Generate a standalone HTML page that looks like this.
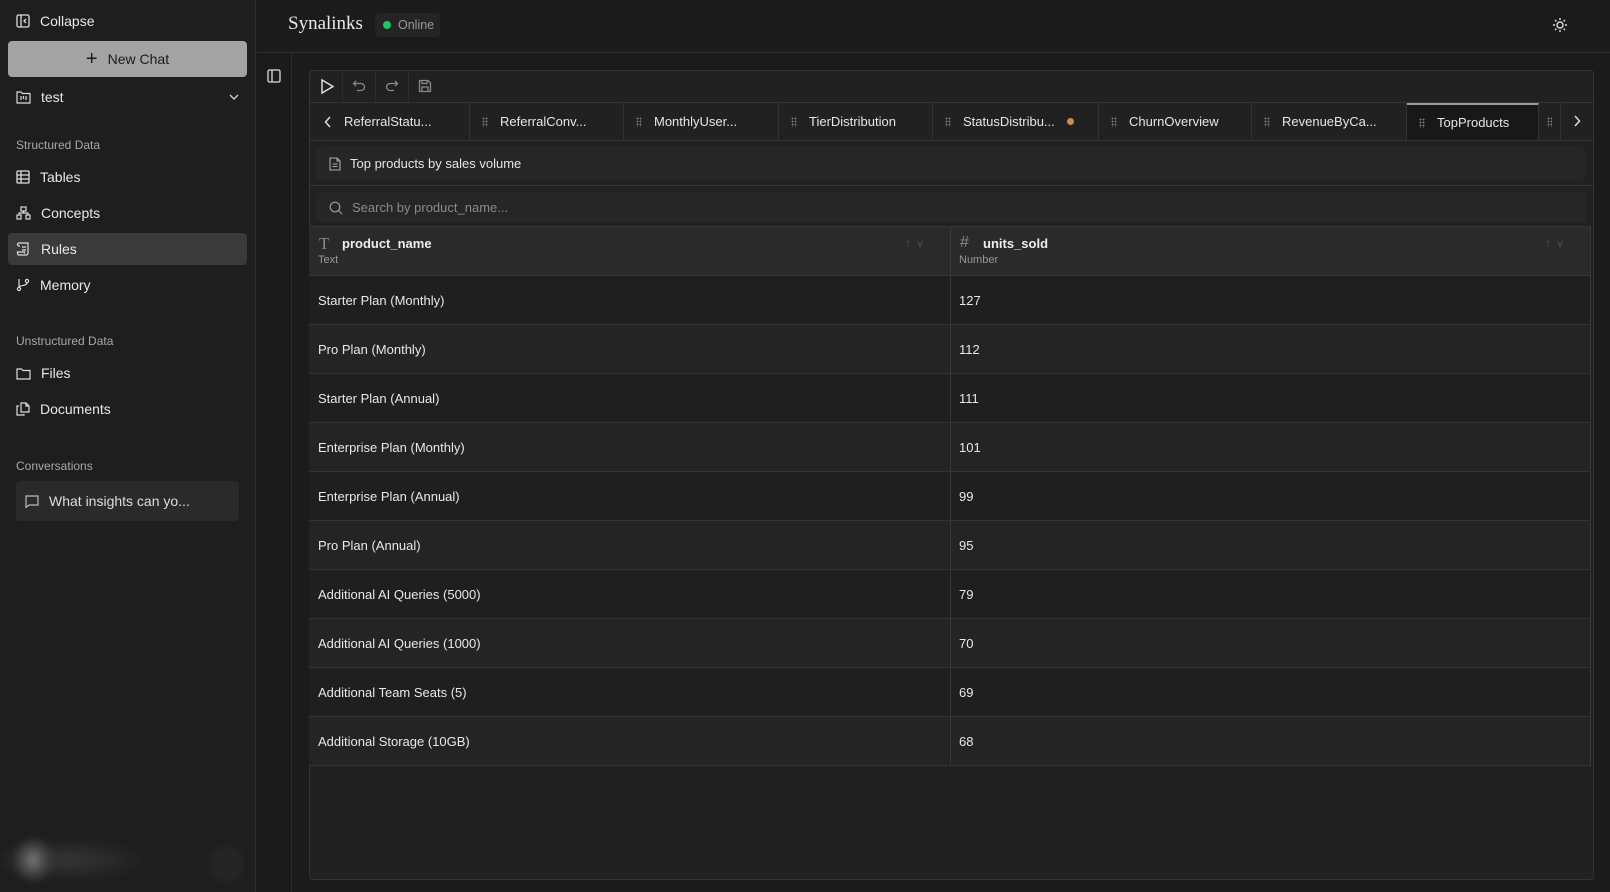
<!DOCTYPE html>
<html><head><meta charset="utf-8"><style>
*{box-sizing:border-box;margin:0;padding:0}
body{width:1610px;height:892px;background:#1b1b1b;font-family:"Liberation Sans",sans-serif;color:#e6e6e6;position:relative;overflow:hidden;font-size:14px}
.a{position:absolute}
svg{display:block}
.side{left:0;top:0;width:256px;height:892px;background:#1e1e1e;border-right:1px solid #2c2c2c}
.item{left:16px;height:20px;display:flex;align-items:center;gap:10px;font-size:14px;color:#e8e8e8}
.sec{left:16px;font-size:12px;color:#a8a8a8}
.tab{top:103px;height:37px;border-right:1px solid #333;display:flex;align-items:center;font-size:13px;color:#e6e6e6}
.grip{width:6px;height:10px;margin:0 12px 0 12px;background:radial-gradient(circle,#777 0.8px,transparent 1px) 0 0/3px 3px}
.row{left:309px;width:1282px;height:49px;border-bottom:1px solid #333;font-size:13px;color:#e8e8e8}
.row span{position:absolute;top:17px}
</style></head><body>
<div class="a side">
  <div class="a item" style="top:11px"><svg width="14" height="14" viewBox="0 0 14 14" fill="none" stroke="#ddd" stroke-width="1.3"><rect x="1" y="1" width="12" height="12" rx="1.5"/><path d="M5 1v12M10 5L8 7l2 2"/></svg>Collapse</div>
  <div class="a" style="left:8px;top:41px;width:239px;height:36px;background:#a3a3a3;border-radius:4px;display:flex;align-items:center;justify-content:center;gap:10px;color:#1b1b1b;font-size:14px"><span style="font-size:20px;font-weight:300;line-height:1">+</span>New Chat</div>
  <div class="a item" style="top:87px;width:224px"><svg width="15" height="14" viewBox="0 0 15 14" fill="none" stroke="#ddd" stroke-width="1.2"><path d="M1 2h4l1.5 1.5H14V13H1z"/><path d="M5 6v4M7.5 6v3M10 6v4"/></svg>test<svg style="margin-left:auto" width="12" height="8" viewBox="0 0 12 8" fill="none" stroke="#ccc" stroke-width="1.4"><path d="M2 2l4 4 4-4"/></svg></div>
  <div class="a sec" style="top:138px">Structured Data</div>
  <div class="a item" style="top:167px"><svg width="14" height="14" viewBox="0 0 14 14" fill="none" stroke="#ddd" stroke-width="1.3"><rect x="1" y="1" width="12" height="12" rx="1"/><path d="M1 5h12M1 9h12M5 1v12"/></svg>Tables</div>
  <div class="a item" style="top:203px"><svg width="15" height="14" viewBox="0 0 15 14" fill="none" stroke="#ddd" stroke-width="1.2"><rect x="5" y="1" width="5" height="4"/><rect x="1" y="9" width="4" height="4"/><rect x="10" y="9" width="4" height="4"/><path d="M7.5 5v2H3v2M7.5 7H12v2"/></svg>Concepts</div>
  <div class="a" style="left:8px;top:233px;width:239px;height:32px;background:#3a3a3a;border-radius:4px"></div>
  <div class="a item" style="top:239px"><svg width="15" height="14" viewBox="0 0 15 14" fill="none" stroke="#ddd" stroke-width="1.2"><path d="M3 1h9v10a2 2 0 0 1-2 2H3M3 1a1.5 1.5 0 0 0 0 3h1M3 13a1.5 1.5 0 0 1-1.5-1.5V10h7v1.5M6 5h4M6 8h4"/></svg>Rules</div>
  <div class="a item" style="top:275px"><svg width="14" height="14" viewBox="0 0 14 14" fill="none" stroke="#ddd" stroke-width="1.2"><circle cx="3" cy="11" r="1.6"/><circle cx="11" cy="3" r="1.6"/><path d="M3 1v8.4M11 4.6c0 4-8 2-8 5"/></svg>Memory</div>
  <div class="a sec" style="top:334px">Unstructured Data</div>
  <div class="a item" style="top:363px"><svg width="15" height="13" viewBox="0 0 15 13" fill="none" stroke="#ddd" stroke-width="1.2"><path d="M1 2h4.5l1.5 1.5h7V12H1z"/></svg>Files</div>
  <div class="a item" style="top:399px"><svg width="14" height="14" viewBox="0 0 14 14" fill="none" stroke="#ddd" stroke-width="1.2"><path d="M5 1h5l3 3v6H5zM10 1v3h3M3 4H1v9h7v-1"/></svg>Documents</div>
  <div class="a sec" style="top:459px">Conversations</div>
  <div class="a" style="left:16px;top:481px;width:223px;height:40px;background:#2a2a2a;border-radius:4px;display:flex;align-items:center;gap:10px;padding-left:9px;font-size:14px;color:#ddd"><svg width="14" height="13" viewBox="0 0 14 13" fill="none" stroke="#bbb" stroke-width="1.2"><path d="M1 1h12v9H4l-3 2.5z"/></svg>What insights can yo...</div>
  <div class="a" style="left:0px;top:820px;width:180px;height:70px;background:radial-gradient(ellipse 22px 24px at 33px 40px,#777,#444 55%,transparent 100%),radial-gradient(ellipse 80px 22px at 70px 40px,#363636,transparent 100%);filter:blur(3px)"></div>
  <div class="a" style="left:210px;top:845px;width:34px;height:38px;border-radius:50%;background:#252525;filter:blur(2px)"></div>
</div>
<div class="a" style="left:257px;top:0;width:1353px;height:53px;border-bottom:1px solid #303030;background:#1b1b1b"></div>
<div class="a" style="left:288px;top:13px;font-family:'Liberation Serif',serif;font-size:19px;color:#e8e8e8">Synalinks</div>
<div class="a" style="left:375px;top:13px;width:65px;height:24px;background:#242424;border-radius:4px;font-size:12.5px;color:#999;display:flex;align-items:center;padding-left:8px;gap:7px"><span style="width:8px;height:8px;border-radius:50%;background:#22c55e"></span>Online</div>
<svg class="a" style="left:1552px;top:17px" width="16" height="16" viewBox="0 0 16 16" fill="none" stroke="#ddd" stroke-width="1.4"><circle cx="8" cy="8" r="3"/><path d="M8 1v2M8 13v2M1 8h2M13 8h2M3 3l1.4 1.4M11.6 11.6L13 13M3 13l1.4-1.4M11.6 4.4L13 3"/></svg>
<div class="a" style="left:257px;top:54px;width:35px;height:838px;border-right:1px solid #2c2c2c;background:#1b1b1b"></div>
<svg class="a" style="left:267px;top:69px" width="14" height="14" viewBox="0 0 14 14" fill="none" stroke="#ddd" stroke-width="1.3"><rect x="1" y="1" width="12" height="12" rx="1.5"/><path d="M5 1v12"/></svg>
<div class="a" style="left:309px;top:70px;width:1285px;height:810px;background:#212121;border:1px solid #333;border-radius:4px"></div>
<div class="a" style="left:310px;top:102px;width:1283px;height:1px;background:#333"></div>
<svg class="a" style="left:319px;top:78px" width="16" height="17" viewBox="0 0 16 17" fill="none" stroke="#e6e6e6" stroke-width="1.4"><path d="M3 2l11 6.5L3 15z"/></svg>
<div class="a" style="left:342px;top:71px;width:1px;height:31px;background:#2e2e2e"></div>
<svg class="a" style="left:352px;top:79px" width="14" height="14" viewBox="0 0 14 14" fill="none" stroke="#888" stroke-width="1.3"><path d="M4 2L1.5 4.5 4 7M1.5 4.5H9a3.5 3.5 0 0 1 0 7H5"/></svg>
<div class="a" style="left:375px;top:71px;width:1px;height:31px;background:#2e2e2e"></div>
<svg class="a" style="left:385px;top:79px" width="14" height="14" viewBox="0 0 14 14" fill="none" stroke="#888" stroke-width="1.3"><path d="M10 2l2.5 2.5L10 7M12.5 4.5H5a3.5 3.5 0 0 0 0 7h4"/></svg>
<div class="a" style="left:408px;top:71px;width:1px;height:31px;background:#2e2e2e"></div>
<svg class="a" style="left:418px;top:79px" width="14" height="14" viewBox="0 0 14 14" fill="none" stroke="#888" stroke-width="1.3"><path d="M1.5 1.5h8.5l2.5 2.5v8.5h-11zM4 1.5v3h5v-3M4 12.5V8h6v4.5"/></svg>
<div class="a" style="left:310px;top:140px;width:1283px;height:1px;background:#333"></div>
<div class="a tab" style="left:310px;width:160px"><svg style="margin:0 12px 0 14px" width="8" height="12" viewBox="0 0 8 12" fill="none" stroke="#ddd" stroke-width="1.5"><path d="M6 1L1.5 6 6 11"/></svg>ReferralStatu...</div>
<div class="a tab" style="left:470px;width:154px"><span class="grip"></span>ReferralConv...</div>
<div class="a tab" style="left:624px;width:155px"><span class="grip"></span>MonthlyUser...</div>
<div class="a tab" style="left:779px;width:154px"><span class="grip"></span>TierDistribution</div>
<div class="a tab" style="left:933px;width:166px"><span class="grip"></span>StatusDistribu...<span style="width:7px;height:7px;border-radius:50%;background:#d08a4a;margin-left:12px"></span></div>
<div class="a tab" style="left:1099px;width:153px"><span class="grip"></span>ChurnOverview</div>
<div class="a tab" style="left:1252px;width:155px"><span class="grip"></span>RevenueByCa...</div>
<div class="a tab" style="left:1407px;width:132px;background:#181818;border-top:2px solid #9a9a9a"><span class="grip"></span>TopProducts</div>
<div class="a tab" style="left:1539px;width:22px;border-right:1px solid #333"><span class="grip" style="margin:0 8px"></span></div>
<svg class="a" style="left:1573px;top:115px" width="8" height="12" viewBox="0 0 8 12" fill="none" stroke="#ddd" stroke-width="1.5"><path d="M2 1l4.5 5L2 11"/></svg>
<div class="a" style="left:316px;top:147px;width:1270px;height:33px;background:#262626;border-radius:6px;display:flex;align-items:center;padding-left:13px;gap:9px;font-size:13px;color:#e6e6e6"><svg width="12" height="14" viewBox="0 0 12 14" fill="none" stroke="#aaa" stroke-width="1.1"><path d="M1 1h7l3 3v9H1zM8 1v3h3M3.5 7h5M3.5 9.5h5"/></svg>Top products by sales volume</div>
<div class="a" style="left:310px;top:185px;width:1283px;height:1px;background:#333"></div>
<div class="a" style="left:316px;top:192px;width:1270px;height:31px;background:#262626;border-radius:6px;display:flex;align-items:center;padding-left:13px;gap:9px;font-size:13px;color:#8a8a8a"><svg width="14" height="14" viewBox="0 0 14 14" fill="none" stroke="#999" stroke-width="1.2"><circle cx="6" cy="6" r="4.8"/><path d="M9.5 9.5L13 13"/></svg>Search by product_name...</div>
<div class="a" style="left:309px;top:226px;width:1282px;height:50px;background:#2a2a2a;border-top:1px solid #333;border-bottom:1px solid #383838"></div>
<div class="a" style="left:319px;top:234px;font-family:'Liberation Serif',serif;font-size:17px;color:#888">T</div>
<div class="a" style="left:342px;top:236px;font-size:13px;font-weight:bold;color:#eee">product_name</div>
<div class="a" style="left:318px;top:254px;font-size:11px;color:#999">Text</div>
<div class="a" style="left:905px;top:236px;font-size:12px;color:#555">↑&nbsp;&nbsp;<span style="font-size:10px">v</span></div>
<div class="a" style="left:960px;top:234px;font-size:16px;color:#888">#</div>
<div class="a" style="left:983px;top:236px;font-size:13px;font-weight:bold;color:#eee">units_sold</div>
<div class="a" style="left:959px;top:254px;font-size:11px;color:#999">Number</div>
<div class="a" style="left:1545px;top:236px;font-size:12px;color:#555">↑&nbsp;&nbsp;<span style="font-size:10px">v</span></div>
<div class="a row" style="top:276px;background:#1f1f1f"><span style="left:9px">Starter Plan (Monthly)</span><span style="left:650px">127</span></div>
<div class="a row" style="top:325px;background:#242424"><span style="left:9px">Pro Plan (Monthly)</span><span style="left:650px">112</span></div>
<div class="a row" style="top:374px;background:#1f1f1f"><span style="left:9px">Starter Plan (Annual)</span><span style="left:650px">111</span></div>
<div class="a row" style="top:423px;background:#242424"><span style="left:9px">Enterprise Plan (Monthly)</span><span style="left:650px">101</span></div>
<div class="a row" style="top:472px;background:#1f1f1f"><span style="left:9px">Enterprise Plan (Annual)</span><span style="left:650px">99</span></div>
<div class="a row" style="top:521px;background:#242424"><span style="left:9px">Pro Plan (Annual)</span><span style="left:650px">95</span></div>
<div class="a row" style="top:570px;background:#1f1f1f"><span style="left:9px">Additional AI Queries (5000)</span><span style="left:650px">79</span></div>
<div class="a row" style="top:619px;background:#242424"><span style="left:9px">Additional AI Queries (1000)</span><span style="left:650px">70</span></div>
<div class="a row" style="top:668px;background:#1f1f1f"><span style="left:9px">Additional Team Seats (5)</span><span style="left:650px">69</span></div>
<div class="a row" style="top:717px;background:#242424"><span style="left:9px">Additional Storage (10GB)</span><span style="left:650px">68</span></div>
<div class="a" style="left:950px;top:226px;width:1px;height:540px;background:#383838"></div>
<div class="a" style="left:1590px;top:226px;width:1px;height:540px;background:#383838"></div>
</body></html>
